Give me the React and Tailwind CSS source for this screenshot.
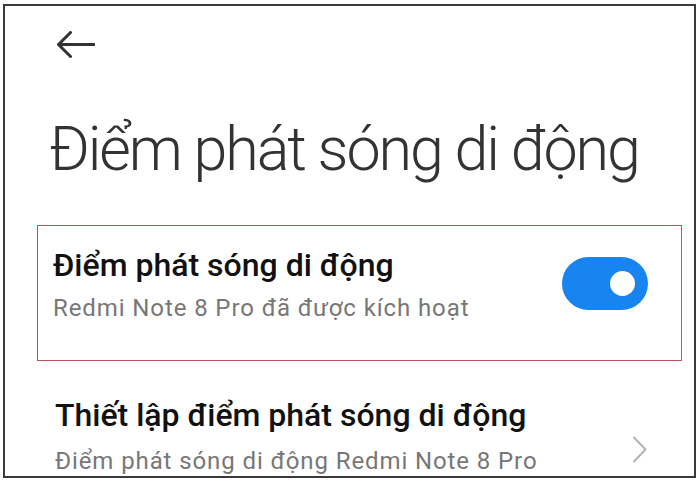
import { useState } from "react";

const font = { fontFamily: "Roboto, 'Noto Sans', sans-serif" };

function Toggle({ on, onClick }) {
    return (
        <button
            onClick={onClick}
            className={`w-[86px] h-[53px] rounded-full flex items-center px-[13px] ${on ? "bg-[#1784f0] justify-end" : "bg-[#c9c9c9] justify-start"}`}
        >
            <span className="block w-[25px] h-[25px] rounded-full bg-white" />
        </button>
    );
}

export default function App() {
    const [hotspot, setHotspot] = useState(true);

    return (
        <div className="w-[700px] h-[481px] bg-white pt-[4px] pl-[3px]" style={font}>
            <div className="w-[693px] h-[474px] border-2 border-[#3a3a3a] overflow-hidden flex flex-col">
                {/* back */}
                <svg className="ml-[52px] mt-[25px] shrink-0" width="38" height="27" viewBox="0 0 38 27" fill="none">
                    <path d="M1.5 13.5H37M13.5 1.5L1.5 13.5L13.5 25.5" stroke="#333" strokeWidth="3" strokeLinecap="round" strokeLinejoin="round" />
                </svg>

                <h1 className="ml-[44px] mt-[61px] text-[61px] leading-none font-light tracking-[-2.1px] text-[#333] whitespace-nowrap">
                    Điểm phát sóng di động
                </h1>

                {/* hotspot switch row */}
                <div className="ml-[32px] mt-[45px] w-[645px] h-[136px] border-[1.5px] border-[#c0525b] flex items-start shrink-0">
                    <div className="ml-[15px] mt-[23px] flex-1">
                        <div className="text-[32px] leading-none font-medium text-[#111] whitespace-nowrap">Điểm phát sóng di động</div>
                        <div className="mt-[15px] text-[24px] leading-none tracking-[0.9px] text-[#777] whitespace-nowrap">Redmi Note 8 Pro đã được kích hoạt</div>
                    </div>
                    <div className="mt-[31px] mr-[33px]">
                        <Toggle on={hotspot} onClick={() => setHotspot(!hotspot)} />
                    </div>
                </div>

                {/* setup row */}
                <div className="ml-[50px] mr-[46px] mt-[38px] flex items-start">
                    <div className="flex-1">
                        <div className="text-[32px] leading-none font-medium text-[#111] whitespace-nowrap">Thiết lập điểm phát sóng di động</div>
                        <div className="mt-[18px] text-[24px] leading-none tracking-[0.9px] text-[#777] whitespace-nowrap">Điểm phát sóng di động Redmi Note 8 Pro</div>
                    </div>
                    <svg className="mt-[37px]" width="16" height="27" viewBox="0 0 16 27" fill="none">
                        <path d="M2 1.5L13.5 13.5L2 25.5" stroke="#b3b3b3" strokeWidth="2" strokeLinecap="round" strokeLinejoin="round" />
                    </svg>
                </div>
            </div>
        </div>
    );
}
